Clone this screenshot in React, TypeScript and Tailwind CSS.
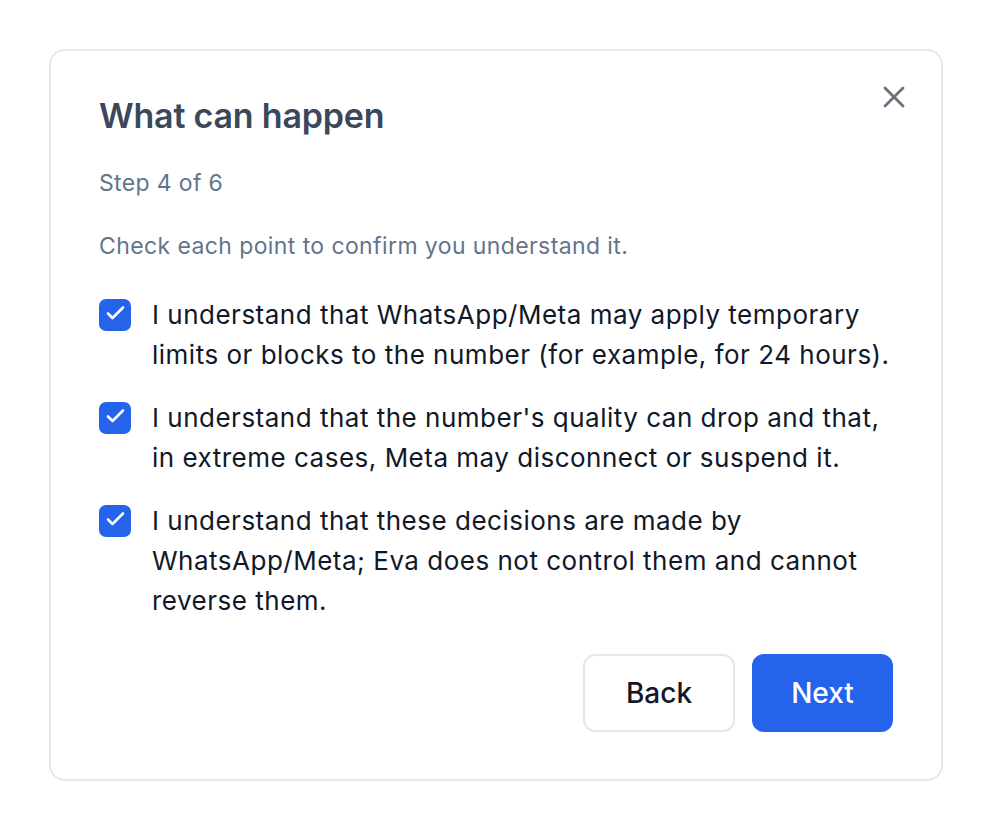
import { X } from "lucide-react";

const points = [
  "I understand that WhatsApp/Meta may apply temporary limits or blocks to the number (for example, for 24 hours).",
  "I understand that the number's quality can drop and that, in extreme cases, Meta may disconnect or suspend it.",
  "I understand that these decisions are made by WhatsApp/Meta; Eva does not control them and cannot reverse them.",
];

function CheckBox() {
  return (
    <span className="mt-[4px] flex h-[32px] w-[32px] shrink-0 items-center justify-center rounded-[7px] bg-[#2563eb]">
      <svg width="32" height="32" viewBox="0 0 32 32" fill="none">
        <path
          d="M9 14.5l4.5 4.5L24 8.5"
          stroke="white"
          strokeWidth="2.6"
          strokeLinecap="round"
          strokeLinejoin="round"
        />
      </svg>
    </span>
  );
}

export default function App() {
  return (
    <div className="min-h-screen bg-white p-[49px] font-['Inter',sans-serif]">
      <div className="relative w-[894px] rounded-[16px] border-2 border-[#e5e7eb] bg-white px-[48px] pb-[47px] pt-[45px]">
        <button className="absolute right-[29px] top-[28px] text-[#6b7280]">
          <X size={36} strokeWidth={1.9} />
        </button>

        <h2 className="text-[34px] font-semibold leading-[40px] tracking-[-0.2px] text-[#3b475b]">
          What can happen
        </h2>
        <p className="mt-[33px] text-[23px] leading-[28px] tracking-[0.35px] text-[#64748b]">
          Step 4 of 6
        </p>
        <p className="mt-[35px] text-[23px] leading-[28px] tracking-[0.4px] text-[#64748b]">
          Check each point to confirm you understand it.
        </p>

        <div className="mt-[35px] flex flex-col gap-[23px]">
          {points.map((text) => (
            <label key={text} className="flex items-start gap-[21px]">
              <CheckBox />
              <span className="-mr-[10px] text-[26px] leading-[40px] tracking-[0.5px] text-[#111827]">
                {text}
              </span>
            </label>
          ))}
        </div>

        <div className="mt-[33px] flex justify-end gap-[17px]">
          <button className="h-[78px] w-[152px] rounded-[12px] border-2 border-[#e5e7eb] bg-white text-[28px] font-medium text-[#111827]">
            Back
          </button>
          <button className="h-[78px] w-[141px] rounded-[12px] bg-[#2563eb] text-[28px] font-medium text-white">
            Next
          </button>
        </div>
      </div>
    </div>
  );
}
